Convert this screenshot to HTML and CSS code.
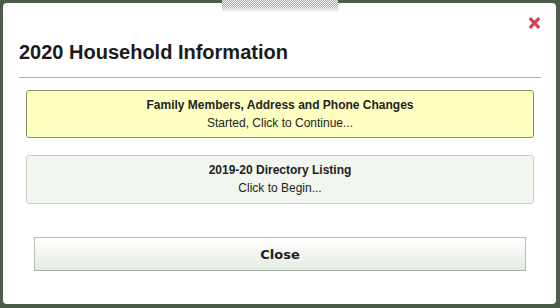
FILE: index.html
```html
<!DOCTYPE html>
<html>
<head>
<meta charset="utf-8">
<link rel="stylesheet" href="styles.css">
</head>
<body>
<div class="grip"></div>
<div class="panel">
  <a class="close-x" aria-label="Close">
    <svg width="13" height="12" viewBox="0 0 13 12"><path d="M1.8 1.2 L11.2 10.8 M11.2 1.2 L1.8 10.8" stroke="#d8414b" stroke-width="3.2" stroke-linecap="butt"/></svg>
  </a>
  <h1 class="title">2020 Household Information</h1>
  <div class="rule"></div>
  <div class="items">
    <div class="item started">
      <div class="item-title">Family Members, Address and Phone Changes</div>
      <div class="item-sub">Started, Click to Continue...</div>
    </div>
    <div class="item fresh">
      <div class="item-title">2019-20 Directory Listing</div>
      <div class="item-sub">Click to Begin...</div>
    </div>
  </div>
  <button class="close-btn">Close</button>
</div>
</body>
</html>
```

FILE: styles.css
```css
html, body {
  margin: 0;
  padding: 0;
}
body {
  background: #4c5e4a;
  width: 560px;
  height: 308px;
  overflow: hidden;
  position: relative;
  font-family: "Liberation Sans", Arial, sans-serif;
}
.grip {
  position: absolute;
  left: 222px;
  top: 0;
  width: 116px;
  height: 12px;
  background-color: #f4f4f4;
  background-image:
    linear-gradient(to bottom, rgba(255,255,255,0) 50%, rgba(255,255,255,0.85) 100%),
    repeating-conic-gradient(#a9a9a9 0 25%, #f0f0f0 0 50%);
  background-size: 100% 100%, 2px 2px;
  z-index: 2;
}
.panel {
  position: relative;
  margin: 3px 0 0 3px;
  width: 553px;
  height: 301px;
  box-sizing: border-box;
  background: #fff;
  border-radius: 4px;
  padding: 38px 15px 0 16px;
}
.close-x {
  position: absolute;
  top: 14px;
  right: 15px;
  display: block;
  width: 13px;
  height: 12px;
  line-height: 0;
}
.title {
  margin: 0;
  font-size: 20px;
  line-height: 23px;
  font-weight: bold;
  color: #1b1b1b;
}
.rule {
  margin-top: 13px;
  height: 1px;
  background: #a9a9a9;
}
.items {
  display: flex;
  flex-direction: column;
  gap: 17px;
  margin: 12px 7px 0 7px;
}
.item {
  border-radius: 3px;
  text-align: center;
  padding: 5px 0 5px;
  font-size: 12px;
  line-height: 18px;
  color: #222;
}
.item.started {
  background: #ffffc2;
  border: 1px solid #8f9166;
}
.item.fresh {
  background: #f1f7ee;
  border: 1px solid #c7cfc3;
  padding-bottom: 6px;
}
.item-title {
  font-weight: bold;
}
.close-btn {
  display: block;
  margin: 33px 15px 0 15px;
  width: calc(100% - 30px);
  height: 34px;
  border: 1px solid #b9bdb7;
  border-bottom-color: #a9b2a6;
  border-radius: 1px;
  background: linear-gradient(to bottom, #ffffff 0%, #f4f6f2 45%, #e3ebe0 100%);
  font-family: "DejaVu Sans", Verdana, sans-serif;
  font-weight: bold;
  font-size: 13px;
  color: #1e1e1e;
  padding: 0;
}
```
